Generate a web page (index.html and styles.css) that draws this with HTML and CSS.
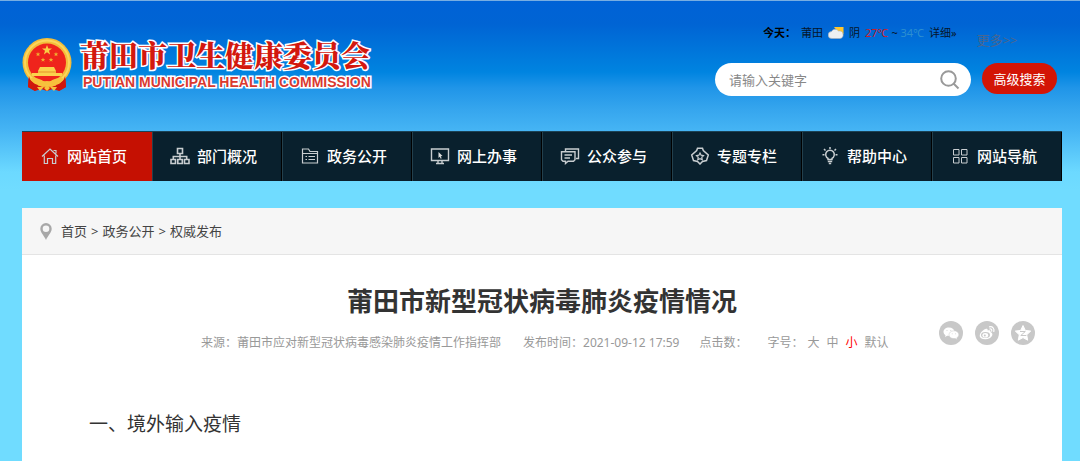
FILE: index.html
```html
<!DOCTYPE html>
<html lang="zh-CN">
<head>
<meta charset="utf-8">
<title>莆田市新型冠状病毒肺炎疫情情况</title>
<link rel="stylesheet" href="styles.css">
</head>
<body>
<!-- 头部 -->
<div class="header">
    <a class="logo" href="#">
        <svg class="emblem" viewBox="0 0 50 54">
            <path d="M7 34 6 49l7 4 6-2 6 2 6-2 6 2 7-4-1-15z" fill="#d8180c"/>
            <circle cx="25" cy="24.500" r="24.500" fill="#f3bd3a"/>
            <circle cx="25" cy="24.500" r="22" fill="none" stroke="#fbd65c" stroke-width="2"/>
            <circle cx="25" cy="24.500" r="19" fill="#ef241c"/>
            <path d="M25 7l1.300 3.500h3.700l-3 2.300 1.100 3.600-3.100-2.100-3.100 2.100 1.100-3.600-3-2.300h3.700z" fill="#f9cf45"/>
            <g fill="#f0b030"><path id="star" d="M16 14l.6 1.500h1.700l-1.300 1 .5 1.700-1.500-1-1.500 1 .5-1.700-1.300-1h1.700z"/><use href="#star" x="18"/><use href="#star" x="5" y="5.500"/><use href="#star" x="13" y="5.500"/></g>
            <path d="M18 29h14l2 4v2h6v3H10v-3h6v-2z" fill="#fbd24c"/>
            <path d="M16 34h18" stroke="#e5912a"/>
            <path d="M9 40c7 0 10 1 13 4l3-1 3 1c3-3 6-4 13-4l-4 6-8 3-4-2-4 2-8-3z" fill="#f7c13c"/>
            <path d="M7 38c1 5 4 8 9 9l-3 6-7-4zM43 38c-1 5-4 8-9 9l3 6 7-4z" fill="#cf160d"/>
            <path d="M15 49l3 4 4-4zM35 49l-3 4-4-4zM22 50l3-3 3 3-3 3z" fill="#f7c13c"/>
        </svg>
        <span class="logo-text">
            <strong class="logo-cn">莆田市卫生健康委员会</strong>
            <span class="logo-en">PUTIAN MUNICIPAL HEALTH COMMISSION</span>
        </span>
    </a>
    <div class="header-right">
        <div class="top-line">
            <div class="weather">
                <b>今天：</b><span>莆田</span>
                <svg class="cloud" viewBox="0 0 16 12">
                    <path d="M6 0h9.500v7L13 9z" fill="#ffc62e"/>
                    <path d="M4 11.500a3.500 3.500 0 0 1-.5-7A4 4 0 0 1 10.500 4a3.800 3.800 0 0 1 1.500 7.500z" fill="#edf0f2" stroke="#a9b0b5" stroke-width=".6"/>
                </svg>
                <span>阴</span>
                <span class="temp"><i class="low">27℃</i> ~ <i class="high">34℃</i></span>
                <a href="#">详细»</a>
            </div>
            <a class="more" href="#">更多&gt;&gt;</a>
        </div>
        <form class="search">
            <div class="search-box">
                <input type="text" aria-label="请输入关键字" placeholder="请输入关键字">
                <button class="search-btn" type="button" aria-label="搜索">
                    <svg viewBox="0 0 20 20"><circle cx="8.500" cy="8.500" r="7.300"/><path d="M13.500 13.500l5 5"/></svg>
                </button>
            </div>
            <button class="senior" type="button">高级搜索</button>
        </form>
    </div>
</div>

<!-- 导航 -->
<ul class="nav">
    <li class="on"><a href="#">
        <svg viewBox="0 0 20 18"><path d="M2 9.500L10 2l8 7.500M13.500 3.500H16v3M4.300 8.500V16.500h3.200v-5h5v5h3.200V8.500"/></svg>网站首页</a></li>
    <li><a href="#">
        <svg viewBox="0 0 20 18"><path d="M7.500 1.500h5v5h-5zM1 12.500h4.500v4H1zM7.800 12.500h4.500v4H7.800zM14.500 12.500H19v4h-4.500zM10 6.500v6M3.300 12.500V9.500h13.400v3" stroke-width="1.600"/></svg>部门概况</a></li>
    <li><a href="#">
        <svg viewBox="0 0 20 18"><path d="M2.500 16V2h6l1.500 2.500h7.500V16zM2.500 6.500h15M5.500 9.500h1.500M8.500 9.500H15M5.500 12.500h1.500M8.500 12.500H15"/></svg>政务公开</a></li>
    <li><a href="#">
        <svg viewBox="0 0 20 18"><path d="M1.500 2h17v11.500h-17zM8 13.500v3M12 13.500v3M6 16.500h8" stroke-width="1.400"/><path d="M8.500 5l4 4-1.800.2 1 2-1 .5-.9-2-1.300 1.200z" fill="#ddd" stroke="none"/></svg>网上办事</a></li>
    <li><a href="#">
        <svg viewBox="0 0 20 18"><path d="M5.500 4.500V2H18.500v9.500h-2.500M1.500 4.800h13.500v8l-1.500 1.500H8l-2.500 2.200v-2.200H3l-1.500-1.500zM4.500 8h7.500M4.500 11h5.500" stroke-width="1.400"/></svg>公众参与</a></li>
    <li><a href="#">
        <svg viewBox="0 0 20 18"><path d="M7.500 1.200h5l.8 2.300 5 4.500-1.800 5.500-4 1L10 17l-2.500-2.500-4-1L1.700 8l5-4.500z" stroke-width="1.500"/><path d="M10 6l1.100 2.200 2.400.4-1.700 1.700.4 2.400L10 11.600l-2.200 1.100.4-2.400-1.700-1.700 2.400-.4z"/></svg>专题专栏</a></li>
    <li><a href="#">
        <svg viewBox="0 0 20 18"><path d="M8 12.500v-1.200a4.300 4.300 0 1 1 4 0v1.200zM7.800 14.500h4.400M8.800 16.500h2.400M10 0v2M4 2l1.500 1.500M16 2l-1.500 1.500M2.500 7.800h2M15.500 7.800h2" stroke-width="1.500"/></svg>帮助中心</a></li>
    <li><a href="#">
        <svg viewBox="0 0 20 18"><path d="M3.500 2.500H9V8H3.500zM11.500 2.500H17V8h-5.500zM3.500 10.500H9V16H3.500zM11.500 10.500H17V16h-5.500z" stroke-width="1"/></svg>网站导航</a></li>
</ul>

<!-- 正文 -->
<div class="main">
    <div class="crumb">
        <svg viewBox="0 0 12 17"><path fill-rule="evenodd" d="M6 0a5.700 5.700 0 0 1 5.700 5.700C11.700 9.500 7.500 13 6 17 4.500 13 .3 9.500.3 5.700A5.700 5.700 0 0 1 6 0zm0 2.500a3.300 3.300 0 1 0 0 6.600 3.300 3.300 0 0 0 0-6.600z" fill="#a8a8a8"/></svg>
        <a href="#">首页</a><span>&gt;</span><a href="#">政务公开</a><span>&gt;</span><a href="#">权威发布</a>
    </div>
    <h1>莆田市新型冠状病毒肺炎疫情情况</h1>
    <div class="info">
        <div class="meta">
            <span class="source">来源：莆田市应对新型冠状病毒感染肺炎疫情工作指挥部</span>
            <span class="time">发布时间：2021-09-12 17:59</span>
            <span class="hits">点击数：</span>
            <span class="size">字号：<a href="#">大</a><a href="#">中</a><a class="cur" href="#">小</a><a href="#">默认</a></span>
        </div>
        <div class="share">
            <a href="#" aria-label="微信"><svg viewBox="0 0 24 24"><circle cx="12" cy="12" r="12" fill="#c8c8c8"/><path d="M10 6.500c-3.300 0-5.500 2-5.500 4.300 0 1.400.8 2.600 2 3.400L6 16l2.200-1.200c4.800.8 7.400-1.500 7.300-4.200C15.300 8.200 13 6.500 10 6.500z" fill="#fff"/><path d="M15 9.800c-3 0-5 1.800-5 3.900s2.200 4 5 3.900l1.300-.2 1.900 1-.4-1.600c1.200-.8 2-1.800 2-3.100 0-2.200-2-3.900-4.800-3.900z" fill="#fff" stroke="#c8c8c8" stroke-width=".5"/><path d="M7.500 9.500h1M11.300 9.500h1M12.800 12.800h.8M16.200 12.800h.8" stroke="#d8d8d8"/></svg></a>
            <a href="#" aria-label="微博"><svg viewBox="0 0 24 24"><circle cx="12" cy="12" r="12" fill="#c8c8c8"/><path d="M10.500 8c1.300-.6 2.400 0 2.200 1.500 1.800-.7 3.300-.2 2.800 1.500 4 1.500 1.500 7-5 7.200-7.500.1-7-5.200-2.500-8.700C8.800 8.800 9.600 8.300 10.500 8z" fill="#fff"/><ellipse cx="10.500" cy="14" rx="4.500" ry="3" fill="#c8c8c8"/><ellipse cx="10.300" cy="14.200" rx="2.900" ry="2.300" fill="#fff"/><circle cx="9.800" cy="14.600" r="1" fill="#c8c8c8"/><path d="M14.500 5.800c3-.7 5.200 1.800 4.300 4.700M14.800 8c1.500-.3 2.300.8 1.900 2.100" fill="none" stroke="#fff" stroke-width="1.200" stroke-linecap="round"/></svg></a>
            <a href="#" aria-label="QQ空间"><svg viewBox="0 0 24 24"><circle cx="12" cy="12" r="12" fill="#c8c8c8"/><path d="M12 4.500l2.300 4.900 5.400.7-4 3.700 1 5.400-4.700-2.600-4.700 2.600 1-5.400-4-3.700 5.400-.7z" fill="#fff" stroke="#fff" stroke-linejoin="round"/><path d="M9 10.500h5.300l-4.500 4h5.500" fill="none" stroke="#c8c8c8"/></svg></a>
        </div>
    </div>
    <div class="content">
        <p>一、境外输入疫情</p>
    </div>
</div>
</body>
</html>
```
FILE: styles.css
```css
*{
    margin: 0;
    padding: 0;
    box-sizing: border-box;
}
body{
    min-height: 100vh;
    display: flex;
    flex-direction: column;
    padding: 0 18px 0 22px;
    border-top: 1px solid #78aee2;
    font: 13px/20px "Noto Sans", "Noto Sans CJK SC", sans-serif;
    color: #444;
    background: #70dcff linear-gradient(#0062d6 0, #0064d4 24px, #0074da 48px, #0084e0 72px, #2095e8 88px, #36a6ee 110px, #45b4f4 130px, #6cd9ff 172px, #70dcff 190px) no-repeat;
}
a{
    color: inherit;
    text-decoration: none;
}
ul{
    list-style: none;
}
/* 头部 */
.header{
    display: flex;
    justify-content: space-between;
    height: 130px;
    padding-right: 5px;
}
.logo{
    display: flex;
    align-items: flex-start;
    gap: 8px;
    padding-top: 37px;
}
.emblem{
    width: 50px;
    height: 54px;
}
.logo-text{
    display: flex;
    flex-direction: column;
    color: #d3180e;
    -webkit-text-stroke: 3px #fff;
    paint-order: stroke fill;
    white-space: nowrap;
}
.logo-cn{
    font: 900 29px/34px "Noto Serif CJK SC", "Noto Sans CJK SC", serif;
}
.logo-en{
    padding-left: 3px;
    font: bold 14px/20px "Liberation Sans", sans-serif;
    color: #da3a30;
}
.header-right{
    width: 342px;
    padding-top: 22px;
}
.top-line{
    display: flex;
    gap: 20px;
    height: 40px;
    padding-left: 48px;
}
/* 天气 */
.weather{
    display: flex;
    align-items: center;
    gap: 5px;
    height: 20px;
    color: #06152a;
    font-size: 11px;
    white-space: nowrap;
}
.weather b{
    color: #000;
}
.weather i{
    font-style: normal;
}
.cloud{
    width: 16px;
    height: 12px;
}
.low{
    color: #c8202c;
}
.high{
    color: #2c8fd0;
}
.more{
    padding-top: 7px;
    color: #4a6690;
    white-space: nowrap;
}
/* 搜索 */
.search{
    display: flex;
    align-items: flex-start;
    gap: 11px;
}
.search-box{
    flex: 1;
    display: flex;
    align-items: center;
    height: 33px;
    padding: 0 11px 0 14px;
    border-radius: 17px;
    background: #fff;
}
.search-box input{
    flex: 1;
    min-width: 0;
    border: 0;
    outline: 0;
    background: none;
    font: inherit;
}
.search-box input::placeholder{
    color: #888;
}
.search-btn{
    width: 20px;
    height: 20px;
    border: 0;
    background: none;
}
.search-btn svg{
    display: block;
    fill: none;
    stroke: #999;
    stroke-width: 2;
}
.senior{
    width: 75px;
    height: 31px;
    border: 0;
    border-radius: 16px;
    background: #d31506;
    color: #fff;
    font: inherit;
}
/* 导航 */
.nav{
    display: flex;
    height: 50px;
    border-top: 1px solid #1c4254;
    background: #09202d;
}
.nav li{
    flex: 1;
    border-left: 1px solid #24404c;
    border-right: 1px solid #000;
}
.nav .on{
    border-color: #c51002;
    background: #c51002;
}
.nav a{
    display: flex;
    align-items: center;
    justify-content: center;
    gap: 7px;
    height: 48px;
    padding-right: 7px;
    color: #fff;
    font-size: 15px;
    font-weight: 500;
    white-space: nowrap;
}
.nav svg{
    width: 20px;
    height: 18px;
    fill: none;
    stroke: #c8cdd0;
    stroke-width: 1.2;
}
/* 正文 */
.main{
    flex: 1;
    margin-top: 27px;
    background: #fff;
}
.crumb{
    display: flex;
    align-items: center;
    gap: 4px;
    height: 47px;
    padding-left: 18px;
    border-bottom: 1px solid #e4e4e4;
    background: #f6f6f6;
}
.crumb svg{
    width: 12px;
    height: 17px;
    margin-right: 5px;
}
.main h1{
    padding-top: 27px;
    text-align: center;
    font-size: 26px;
    line-height: 38px;
    color: #333;
}
.info{
    display: flex;
    justify-content: space-between;
    padding: 1px 27px 0 179px;
}
.meta{
    display: flex;
    padding-top: 12px;
    font-size: 12px;
    color: #999;
    white-space: nowrap;
}
.source{
    margin-right: 22px;
}
.time,
.hits{
    margin-right: 20px;
}
.size a{
    margin: 0 3px 0 4px;
}
.size .cur{
    color: #f00;
}
.share{
    display: flex;
    gap: 12px;
}
.share svg{
    display: block;
    width: 24px;
    height: 24px;
}
.content{
    padding: 56px 67px 20px;
    font-size: 19px;
    line-height: 30px;
    color: #333;
}
```
